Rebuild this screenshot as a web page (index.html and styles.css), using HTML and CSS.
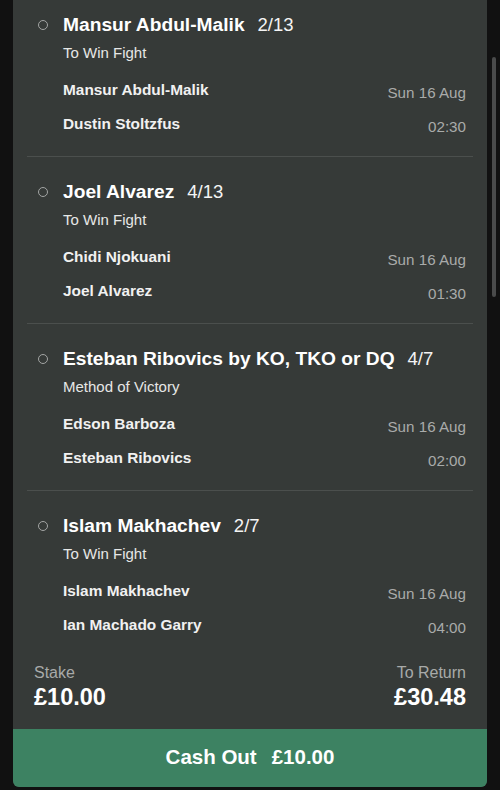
FILE: index.html
```html
<!DOCTYPE html>
<html lang="en">
<head>
<meta charset="utf-8">
<title>Bet Slip</title>
<link rel="stylesheet" href="styles.css">
</head>
<body>
<div class="page">
  <div class="card">
    <div class="viewport">
      <div class="list">
        <section class="leg">
          <div class="leg-title"><span class="dot"></span><span class="pick">Mansur Abdul-Malik</span><span class="odds">2/13</span></div>
          <div class="market">To Win Fight</div>
          <div class="event">
            <div class="names"><span>Mansur Abdul-Malik</span><span>Dustin Stoltzfus</span></div>
            <div class="when"><span>Sun 16 Aug</span><span>02:30</span></div>
          </div>
        </section>
        <section class="leg">
          <div class="leg-title"><span class="dot"></span><span class="pick">Joel Alvarez</span><span class="odds">4/13</span></div>
          <div class="market">To Win Fight</div>
          <div class="event">
            <div class="names"><span>Chidi Njokuani</span><span>Joel Alvarez</span></div>
            <div class="when"><span>Sun 16 Aug</span><span>01:30</span></div>
          </div>
        </section>
        <section class="leg">
          <div class="leg-title"><span class="dot"></span><span class="pick">Esteban Ribovics by KO, TKO or DQ</span><span class="odds">4/7</span></div>
          <div class="market">Method of Victory</div>
          <div class="event">
            <div class="names"><span>Edson Barboza</span><span>Esteban Ribovics</span></div>
            <div class="when"><span>Sun 16 Aug</span><span>02:00</span></div>
          </div>
        </section>
        <section class="leg leg-last">
          <div class="leg-title"><span class="dot"></span><span class="pick">Islam Makhachev</span><span class="odds">2/7</span></div>
          <div class="market">To Win Fight</div>
          <div class="event">
            <div class="names"><span>Islam Makhachev</span><span>Ian Machado Garry</span></div>
            <div class="when"><span>Sun 16 Aug</span><span>04:00</span></div>
          </div>
        </section>
      </div>
    </div>
    <div class="totals">
      <div class="total">
        <span class="total-label">Stake</span>
        <span class="total-value">£10.00</span>
      </div>
      <div class="total total-right">
        <span class="total-label">To Return</span>
        <span class="total-value">£30.48</span>
      </div>
    </div>
    <button class="cashout"><span>Cash Out</span><span>£10.00</span></button>
  </div>
  <div class="scrollbar"></div>
</div>
</body>
</html>
```
FILE: styles.css
```css
* { box-sizing: border-box; }

html, body {
  margin: 0;
  padding: 0;
  background: #111111;
  overflow: hidden;
}

body {
  font-family: "Liberation Sans", Arial, sans-serif;
  color: #ffffff;
}

.page {
  position: relative;
  width: 500px;
  height: 790px;
  padding: 0 13px;
}

.card {
  background: #363a38;
  border-radius: 0 0 6px 6px;
  display: flex;
  flex-direction: column;
  overflow: hidden;
}

.viewport {
  height: 657px;
  overflow: hidden;
  padding: 0 14px;
}

.list {
  margin-top: -10px;
}

.leg {
  padding: 23px 7px 22px 0;
  border-bottom: 1px solid #4b4f4d;
}

.leg-last {
  border-bottom: none;
}

.leg-title {
  display: flex;
  align-items: center;
  height: 24px;
  line-height: 24px;
}

.dot {
  width: 10px;
  height: 10px;
  border: 1.5px solid #a3a5a4;
  border-radius: 50%;
  margin-left: 11px;
  margin-right: 15px;
  flex: none;
}

.pick {
  font-size: 19.2px;
  font-weight: bold;
  color: #ffffff;
}

.odds {
  font-size: 18.5px;
  margin-left: 13px;
  color: #f4f4f4;
}

.market {
  margin-top: 6px;
  margin-left: 36px;
  line-height: 20px;
  font-size: 15px;
  color: #e6e7e6;
}

.event {
  margin-top: 17px;
  margin-left: 36px;
  display: flex;
  align-items: flex-start;
  justify-content: space-between;
}

.names, .when {
  display: flex;
  flex-direction: column;
  gap: 14px;
}

.names span {
  line-height: 20px;
  font-size: 15.4px;
  font-weight: bold;
  color: #f1f1f1;
}

.when {
  padding-top: 3px;
  margin-bottom: -3px;
  align-items: flex-end;
}

.when span {
  line-height: 20px;
  font-size: 15.2px;
  color: #a9abaa;
}

.totals {
  display: flex;
  justify-content: space-between;
  padding: 6px 21px 18px;
}

.total {
  display: flex;
  flex-direction: column;
}

.total-right {
  align-items: flex-end;
}

.total-label {
  line-height: 20px;
  font-size: 16px;
  color: #a8aaa9;
}

.total-value {
  line-height: 28px;
  font-size: 23.5px;
  font-weight: bold;
  color: #ffffff;
}

.cashout {
  height: 58px;
  border: none;
  margin: 0;
  background: #3d8262;
  color: #ffffff;
  font-family: "Liberation Sans", Arial, sans-serif;
  font-size: 20.5px;
  font-weight: bold;
  display: flex;
  align-items: center;
  justify-content: center;
  gap: 15px;
  padding: 0 0 2px;
}

.scrollbar {
  position: absolute;
  left: 492px;
  top: 57px;
  width: 4px;
  height: 240px;
  border-radius: 2px;
  background: #4a4b4b;
}
```
